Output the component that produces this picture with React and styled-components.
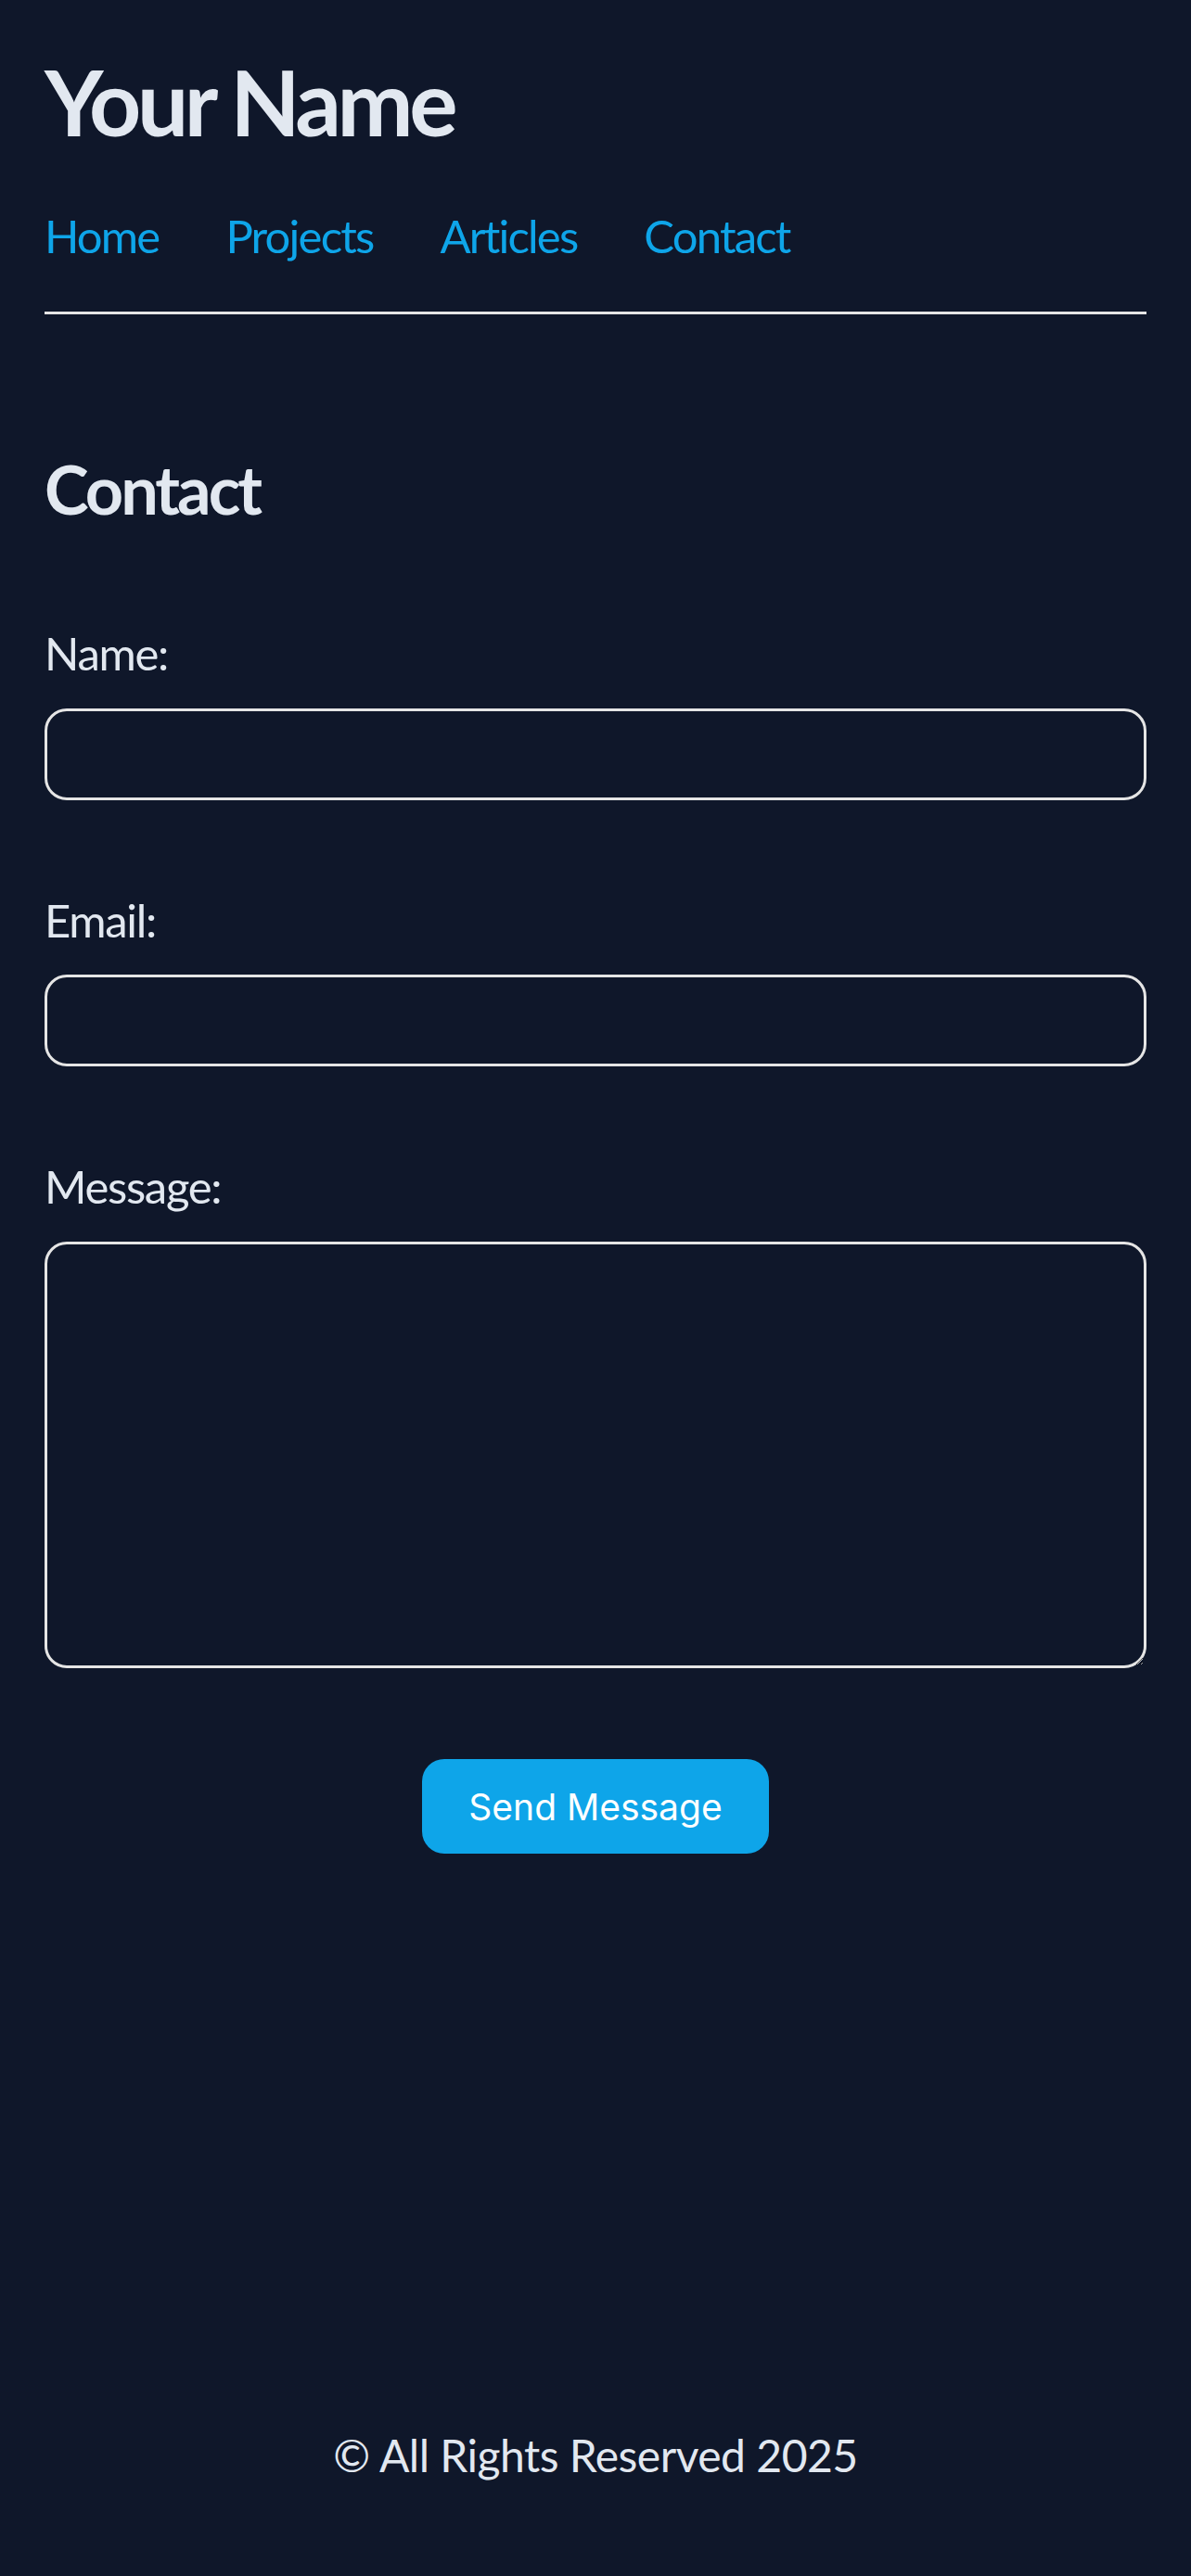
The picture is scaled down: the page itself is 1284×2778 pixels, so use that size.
import React from 'react';
import styled, { createGlobalStyle } from 'styled-components';

const GlobalStyle = createGlobalStyle`
  html, body {
    margin: 0;
    padding: 0;
    background: #0f172a;
  }
  * {
    box-sizing: border-box;
  }
`;

const Page = styled.div`
  min-height: 100vh;
  display: flex;
  flex-direction: column;
  padding: 0 48px;
  background: #0f172a;
  color: #e2e8f0;
  font-family: Lato, "Open Sans", sans-serif;
`;

const Header = styled.header`
  padding-top: 51px;
  padding-bottom: 53px;
  border-bottom: 3px solid #e5e5e5;
`;

const Title = styled.h1`
  margin: 0;
  font-size: 98px;
  line-height: 1.2;
  font-weight: 700;
  letter-spacing: -4.4px;
`;

const Nav = styled.nav`
  display: flex;
  gap: 72px;
  margin-top: 56px;
`;

const NavLink = styled.a`
  font-size: 49px;
  line-height: 1.2;
  color: #0ea5e9;
  text-decoration: none;
  letter-spacing: -1.8px;
`;

const Main = styled.main`
  padding-top: 145px;
`;

const Heading = styled.h2`
  margin: 0 0 104px;
  font-size: 72px;
  line-height: 1.2;
  font-weight: 700;
  letter-spacing: -3px;
`;

const Form = styled.form`
  display: flex;
  flex-direction: column;
`;

const Field = styled.div`
  display: flex;
  flex-direction: column;
  gap: 30px;
  margin-bottom: 100px;
`;

const Label = styled.label`
  font-size: 49px;
  line-height: 1.2;
  letter-spacing: -1.3px;
`;

const Input = styled.input`
  width: 100%;
  height: 99px;
  border: 3px solid #e5e5e5;
  border-radius: 24px;
  background: transparent;
  color: #e2e8f0;
  font-size: 48px;
  padding: 0 24px;
  outline: none;
`;

const TextArea = styled.textarea`
  width: 100%;
  height: 460px;
  border: 3px solid #e5e5e5;
  border-radius: 24px;
  background: transparent;
  color: #e2e8f0;
  font-size: 48px;
  padding: 24px;
  outline: none;
  display: block;
`;

const SubmitRow = styled.div`
  display: flex;
  justify-content: center;
  margin-top: -2px;
`;

const Button = styled.button`
  width: 374px;
  height: 102px;
  border: none;
  border-radius: 24px;
  background: #0ea5e9;
  color: #ffffff;
  font-family: Inter, "Liberation Sans", sans-serif;
  font-size: 39px;
  cursor: pointer;
`;

const Footer = styled.footer`
  margin-top: auto;
  padding-bottom: 101px;
  text-align: center;
  font-size: 48px;
  line-height: 1.2;
  letter-spacing: -0.5px;
`;

const links = ['Home', 'Projects', 'Articles', 'Contact'];

const App = () => {
  return (
    <>
      <GlobalStyle />
      <Page>
        <Header>
          <Title>Your Name</Title>
          <Nav>
            {links.map((l) => (
              <NavLink key={l} href="#">{l}</NavLink>
            ))}
          </Nav>
        </Header>
        <Main>
          <Heading>Contact</Heading>
          <Form onSubmit={(e) => e.preventDefault()}>
            <Field>
              <Label htmlFor="name">Name:</Label>
              <Input id="name" type="text" />
            </Field>
            <Field>
              <Label htmlFor="email">Email:</Label>
              <Input id="email" type="email" />
            </Field>
            <Field>
              <Label htmlFor="message">Message:</Label>
              <TextArea id="message" />
            </Field>
            <SubmitRow>
              <Button type="submit">Send Message</Button>
            </SubmitRow>
          </Form>
        </Main>
        <Footer>© All Rights Reserved 2025</Footer>
      </Page>
    </>
  );
};

export default App;
